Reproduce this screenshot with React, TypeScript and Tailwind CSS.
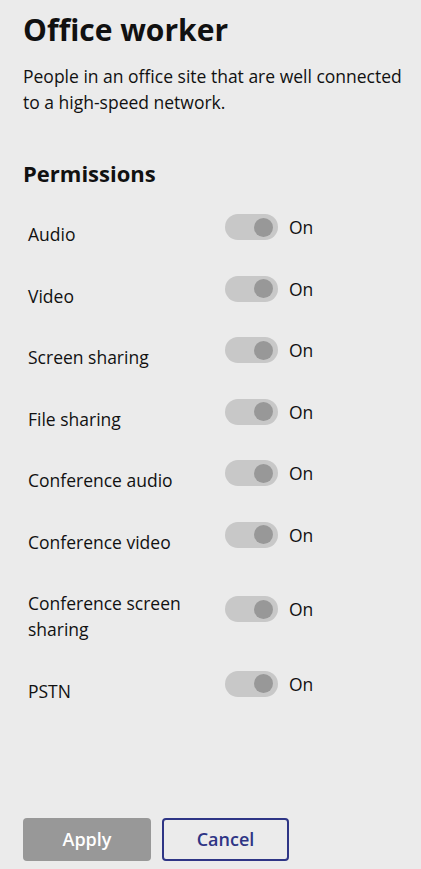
import React from "react";

const perms = [
  "Audio",
  "Video",
  "Screen sharing",
  "File sharing",
  "Conference audio",
  "Conference video",
  "Conference screen sharing",
  "PSTN",
];

function Toggle() {
  return (
    <div className="flex items-center justify-end w-[53px] h-[26px] rounded-full bg-[#c8c8c8] pr-[5px]">
      <div className="w-[19px] h-[19px] rounded-full bg-[#989898]" />
    </div>
  );
}

export default function App() {
  return (
    <div
      className="h-[869px] w-full bg-[#ebebeb] text-[#111111] flex flex-col"
      style={{ fontFamily: '"Open Sans", "Noto Sans", sans-serif' }}
    >
      <div className="px-[23px]">
        <h1 className="text-[30px] leading-[36px] font-bold pt-[12px]">Office worker</h1>
        <p className="text-[17.5px] leading-[26px] mt-[15px] w-[392px]">
          People in an office site that are well connected
          <br />
          to a high-speed network.
        </p>
        <h2 className="text-[22px] leading-[28px] font-bold mt-[44px]">Permissions</h2>
      </div>
      <div className="flex flex-col gap-[21.5px] mt-[20px] pl-[28px]">
        {perms.map((p) => (
          <div key={p} className="flex items-center">
            <div className="w-[197px] pt-[14px] text-[17.5px] leading-[26px] pr-[16px]">{p}</div>
            <div className="flex items-center gap-[11px]">
              <Toggle />
              <span className="text-[17.5px] leading-[26px]">On</span>
            </div>
          </div>
        ))}
      </div>
      <div className="mt-auto flex gap-[11px] px-[23px] pb-[8px]">
        <button className="w-[128px] h-[43px] rounded-[4px] bg-[#989898] text-white text-[18px] font-semibold">
          Apply
        </button>
        <button className="w-[127px] h-[43px] rounded-[4px] border-[2px] border-[#2e3585] text-[#2e3585] text-[18px] font-semibold">
          Cancel
        </button>
      </div>
    </div>
  );
}
